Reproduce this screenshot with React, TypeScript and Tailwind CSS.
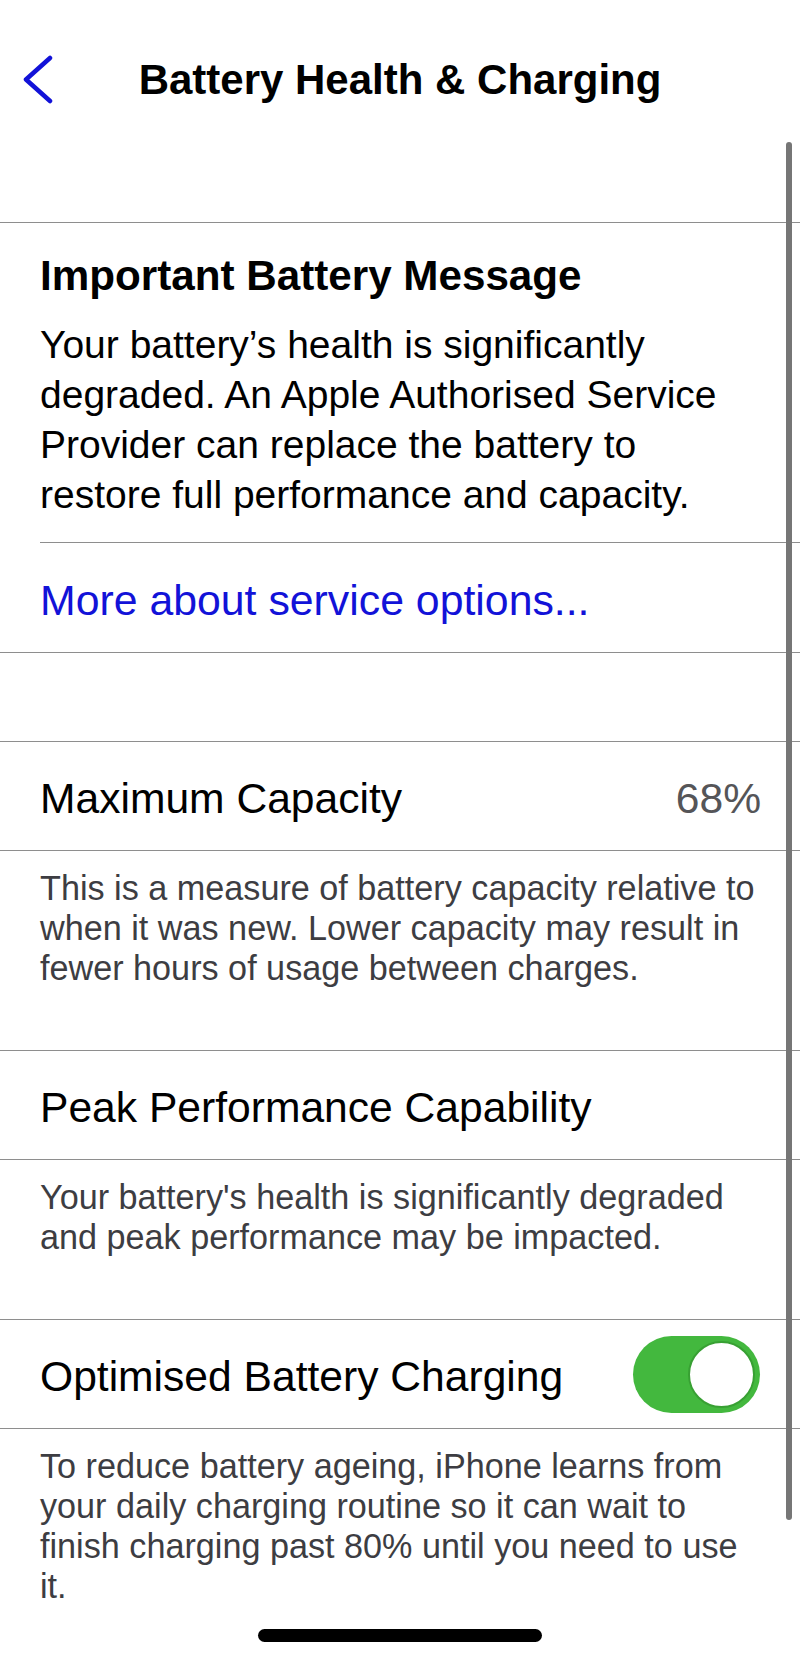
const font = "font-['Liberation_Sans',Arial,sans-serif]";

function BackChevron() {
	return (
		<svg width="32" height="50" viewBox="0 0 32 50" fill="none" className="ml-[22px]">
			<polyline
				points="28,3 4,24.5 28,46"
				stroke="#1212d8"
				strokeWidth="4.5"
				strokeLinecap="round"
				strokeLinejoin="round"
			/>
		</svg>
	);
}

function Toggle({ on }: { on: boolean }) {
	return (
		<div
			className={`flex items-center w-[127px] h-[77px] rounded-full p-[5px] ${
				on ? "bg-[#43b83e] justify-end" : "bg-[#e5e5ea] justify-start"
			}`}
		>
			<div className="w-[67px] h-[67px] rounded-full bg-white border-[2px] border-[#38a033]" />
		</div>
	);
}

function Row({ children }: { children: React.ReactNode }) {
	return (
		<div className="flex items-center justify-between h-[110px] pl-[40px] pr-[40px] border-y border-[#8e8e8e] text-[42.6px] leading-[42px] text-black">
			{children}
		</div>
	);
}

function Footer({ children, last }: { children: React.ReactNode; last?: boolean }) {
	return (
		<p
			className={`pl-[40px] pr-[40px] pt-[17px] ${last ? "pb-[20px]" : "pb-[62px]"} text-[34.2px] leading-[40px] text-[#3d3d42]`}
		>
			{children}
		</p>
	);
}

export default function App() {
	return (
		<div className={`relative min-h-[1660px] w-[800px] bg-white overflow-hidden ${font}`}>
			{/* nav bar */}
			<header className="grid grid-cols-[1fr_auto_1fr] items-center h-[160px]">
				<div className="flex items-center">
					<BackChevron />
				</div>
				<h1 className="text-[42px] leading-[42px] font-bold text-black">Battery Health &amp; Charging</h1>
				<div />
			</header>

			{/* service message */}
			<section className="mt-[62px] border-y border-[#8e8e8e]">
				<div className="ml-[40px] pt-[29px] pb-[22px] pr-[44px] border-b border-[#8e8e8e]">
					<h2 className="text-[42.2px] leading-[48px] font-bold text-black">Important Battery Message</h2>
					<p className="mt-[20px] text-[39px] leading-[50px] text-black">
						Your battery’s health is significantly degraded. An Apple Authorised Service Provider can
						replace the battery to restore full performance and capacity.
					</p>
				</div>
				<div className="flex items-center h-[109px] pl-[40px] pt-[5px] text-[42.8px] leading-[42px] text-[#1212d8]">
					More about service options...
				</div>
			</section>

			<div className="mt-[88px]">
				<Row>
					<span className="pt-[4px]">Maximum Capacity</span>
					<span className="pt-[4px] text-[#555558] -mr-[1px]">68%</span>
				</Row>
				<Footer>
					This is a measure of battery capacity relative to when it was new. Lower capacity may result
					in fewer hours of usage between charges.
				</Footer>

				<Row>
					<span className="pt-[4px]">Peak Performance Capability</span>
				</Row>
				<Footer>
					Your battery's health is significantly degraded and peak performance may be impacted.
				</Footer>

				<Row>
					<span className="pt-[4px]">Optimised Battery Charging</span>
					<Toggle on />
				</Row>
				<Footer last>
					To reduce battery ageing, iPhone learns from your daily charging routine so it can wait to
					finish charging past 80% until you need to use it.
				</Footer>
			</div>

			{/* scroll indicator */}
			<div className="absolute right-[8px] top-[142px] w-[6px] h-[1378px] rounded-full bg-[#767676]" />

			{/* home indicator */}
			<div className="absolute left-[258px] bottom-[18px] w-[284px] h-[13px] rounded-full bg-black" />
		</div>
	);
}
